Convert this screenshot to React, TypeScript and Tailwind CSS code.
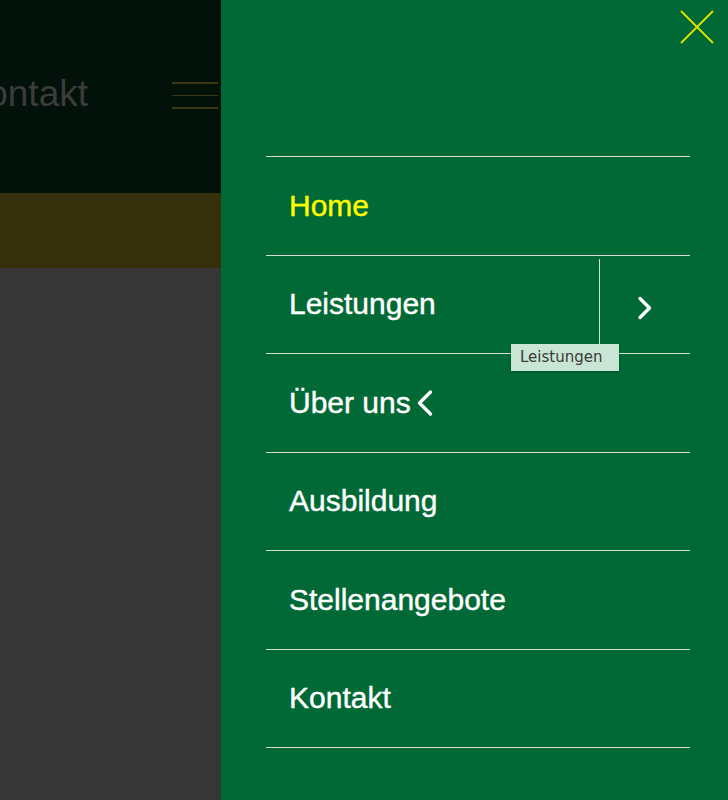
import React from "react";

const items = [
  { label: "Home", active: true },
  { label: "Leistungen", sub: "right" },
  { label: "Über uns", sub: "left" },
  { label: "Ausbildung" },
  { label: "Stellenangebote" },
  { label: "Kontakt" },
];

function ChevronRight() {
  return (
    <svg width="16" height="26" viewBox="0 0 16 26" fill="none">
      <path d="M3 3.5 L12.5 13 L3 22.5" stroke="#fff" strokeWidth="3.4" strokeLinecap="round" strokeLinejoin="round" />
    </svg>
  );
}

function ChevronLeft() {
  return (
    <svg width="18" height="28" viewBox="0 0 18 28" fill="none">
      <path d="M14.5 3 L3.5 14 L14.5 25" stroke="#fff" strokeWidth="3.4" strokeLinecap="round" strokeLinejoin="round" />
    </svg>
  );
}

export default function App() {
  return (
    <div className="flex h-[800px] w-[728px] overflow-hidden" style={{ fontFamily: '"Liberation Sans", Arial, sans-serif' }}>
      {/* dimmed page behind the menu */}
      <div className="flex w-[221px] shrink-0 flex-col">
        <div className="flex h-[193px] items-start bg-[#02120a]">
          <div className="mt-[70px] flex w-[88px] justify-end overflow-hidden">
            <span className="whitespace-nowrap text-[37px] leading-[48px] text-[#3c3c3c]">Kontakt</span>
          </div>
          <div className="ml-[84px] mt-[82px] flex w-[46px] flex-col gap-[11px]">
            <div className="h-[1.5px] bg-[#3b3514]" />
            <div className="h-[1.5px] bg-[#3b3514]" />
            <div className="h-[1.5px] bg-[#3b3514]" />
          </div>
        </div>
        <div className="h-[75px] bg-[#352f0b]" />
        <div className="flex-1 bg-[#363636]" />
      </div>

      {/* menu panel */}
      <div className="relative flex flex-1 flex-col bg-[#006935]">
        <button className="absolute right-[14px] top-[10px]">
          <svg width="34" height="34" viewBox="0 0 34 34" fill="none">
            <path d="M1 1 L33 33 M33 1 L1 33" stroke="#e3e300" strokeWidth="1.8" />
          </svg>
        </button>

        <ul className="ml-[45px] mr-[38px] mt-[156px] border-t border-[#d3dcd6]">
          {items.map((it) => (
            <li key={it.label} className="relative flex h-[98.5px] items-center border-b border-[#d3dcd6]">
              <span
                className={`pl-[23px] text-[30px] leading-none [-webkit-text-stroke:0.4px_currentColor] ${
                  it.active ? "text-[#ffff00]" : "text-white"
                }`}
              >
                {it.label}
              </span>
              {it.sub === "left" && (
                <span className="ml-[5px] flex items-center">
                  <ChevronLeft />
                </span>
              )}
              {it.sub === "right" && (
                <>
                  <div className="ml-auto mt-[6px] flex h-full w-[91px] items-center justify-center border-l border-[#d3dcd6] pt-[2px]">
                    <ChevronRight />
                  </div>
                  <div
                    className="absolute left-[245px] top-[88px] z-10 flex h-[27px] w-[108px] items-center bg-[#c9e5d3] pl-[9px] text-[15px] text-[#3a3a3a] shadow-[0_1px_2px_rgba(0,0,0,0.3)]"
                    style={{ fontFamily: '"DejaVu Sans", sans-serif' }}
                  >
                    Leistungen
                  </div>
                </>
              )}
            </li>
          ))}
        </ul>
      </div>
    </div>
  );
}
